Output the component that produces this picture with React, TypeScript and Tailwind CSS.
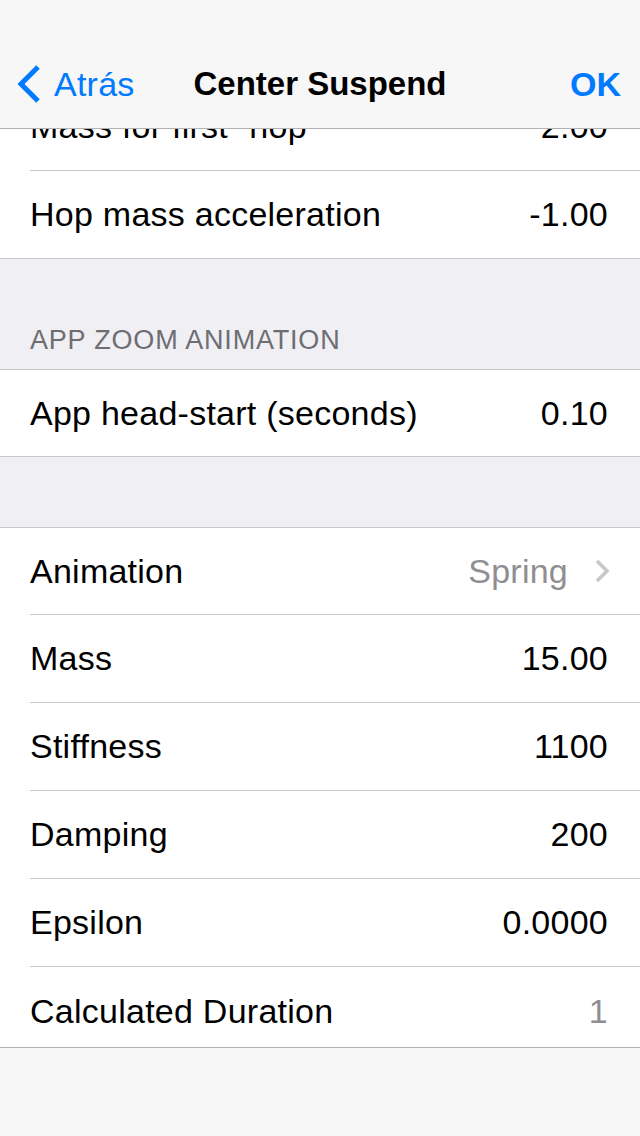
import { ReactNode } from "react";

type Row = {
  label: string;
  value: string;
  muted?: boolean;
  chevron?: boolean;
  h: string;
  sep: boolean;
};

const topRows: Row[] = [
  { label: "Mass for first \u201chop\u201d", value: "2.00", h: "h-[88px]", sep: true },
  { label: "Hop mass acceleration", value: "-1.00", h: "h-[87px]", sep: false },
];

const zoomRows: Row[] = [
  { label: "App head-start (seconds)", value: "0.10", h: "h-[86px]", sep: false },
];

const springRows: Row[] = [
  { label: "Animation", value: "Spring", muted: true, chevron: true, h: "h-[87px]", sep: true },
  { label: "Mass", value: "15.00", h: "h-[88px]", sep: true },
  { label: "Stiffness", value: "1100", h: "h-[88px]", sep: true },
  { label: "Damping", value: "200", h: "h-[88px]", sep: true },
  { label: "Epsilon", value: "0.0000", h: "h-[88px]", sep: true },
  { label: "Calculated Duration", value: "1", muted: true, h: "h-[88px]", sep: false },
];

function Cell({ row }: { row: Row }) {
  return (
    <div className="pl-[30px] bg-white">
      <div
        className={`${row.h} flex items-center justify-between pr-[32px] ${
          row.sep ? "border-b border-[#c8c7cc]" : ""
        }`}
      >
        <span className="text-[34px] tracking-[0.25px] text-black">{row.label}</span>
        <div className="flex items-center gap-[26px]">
          <span
            className={`text-[34px] tracking-[0.25px] ${
              row.muted ? "text-[#8e8e93]" : "text-black"
            }`}
          >
            {row.value}
          </span>
          {row.chevron && (
            <svg width="16" height="26" viewBox="0 0 16 26" className="-mr-[2px]">
              <path
                d="M3 3 L13 13 L3 23"
                fill="none"
                stroke="#c7c7cc"
                strokeWidth={3.5}
              />
            </svg>
          )}
        </div>
      </div>
    </div>
  );
}

function Group({ children }: { children: ReactNode }) {
  return <div className="border-y border-[#c8c7cc] bg-white">{children}</div>;
}

export default function App() {
  return (
    <div
      className="w-[640px] h-[1136px] flex flex-col bg-[#efeff4] overflow-hidden"
      style={{ fontFamily: '"Liberation Sans", Arial, sans-serif' }}
    >
      {/* Nav bar */}
      <header className="h-[129px] shrink-0 bg-[#f7f7f7] border-b border-[#b2b2b2] pt-[40px]">
        <div className="relative h-[88px] flex items-center justify-between">
          <div className="flex items-center pl-[16px] gap-[13px] text-[#007aff]">
            <svg width="25" height="40" viewBox="0 0 25 40">
              <path
                d="M22 3 L5 20 L22 37"
                fill="none"
                stroke="#007aff"
                strokeWidth={5}
              />
            </svg>
            <span className="text-[34px] tracking-[0.25px]">Atrás</span>
          </div>
          <span className="absolute left-0 right-0 text-center text-[33px] font-bold text-black pointer-events-none">
            Center Suspend
          </span>
          <span className="pr-[19px] text-[34px] font-bold text-[#007aff]">OK</span>
        </div>
      </header>

      {/* Table, scrolled under the nav bar */}
      <div className="flex-1 overflow-hidden">
        <div className="-mt-[47px]">
          <Group>
            {topRows.map((r) => (
              <Cell key={r.label} row={r} />
            ))}
          </Group>

          <div className="h-[110px] flex items-end pl-[30px] pb-[13px]">
            <span className="text-[27px] tracking-[0.8px] leading-[32px] text-[#6d6d72]">
              APP ZOOM ANIMATION
            </span>
          </div>

          <Group>
            {zoomRows.map((r) => (
              <Cell key={r.label} row={r} />
            ))}
          </Group>

          <div className="h-[70px]" />

          <Group>
            {springRows.map((r) => (
              <Cell key={r.label} row={r} />
            ))}
          </Group>
        </div>
      </div>

      {/* Toolbar */}
      <div className="h-[89px] shrink-0 bg-[#f7f7f7] border-t border-[#b2b2b2]" />
    </div>
  );
}
